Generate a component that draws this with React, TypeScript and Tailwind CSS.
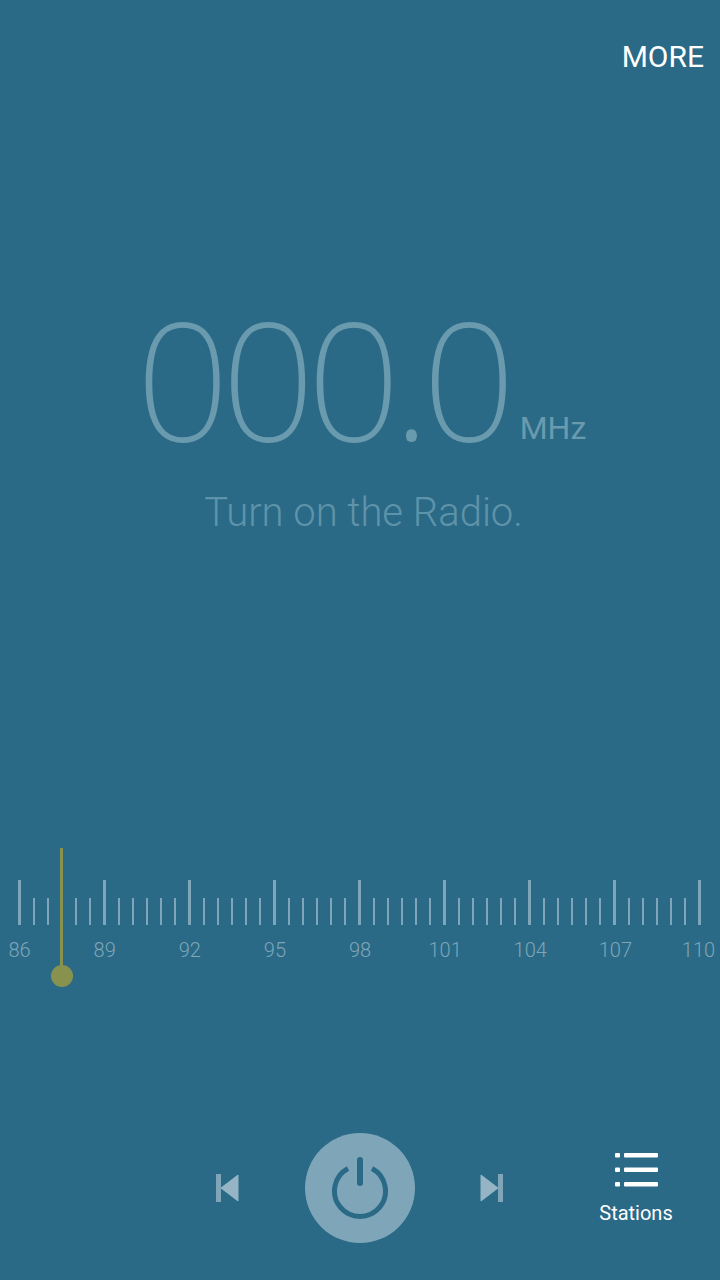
import React from 'react';

const labels = [86, 89, 92, 95, 98, 101, 104, 107, 110];
const ticks = Array.from({ length: 49 }, (_, i) => i);

function PrevIcon() {
  return (
    <svg width="23" height="30" viewBox="0 0 23 30" fill="none">
      <rect x="0" y="1" width="5" height="28" fill="#7fa6b8" />
      <path d="M22 2 L22 28 L5 15 Z" fill="#95b5c4" stroke="#95b5c4" strokeWidth="1" strokeLinejoin="round" />
    </svg>
  );
}

function NextIcon() {
  return (
    <svg width="23" height="30" viewBox="0 0 23 30" fill="none">
      <path d="M1 2 L1 28 L18 15 Z" fill="#95b5c4" stroke="#95b5c4" strokeWidth="1" strokeLinejoin="round" />
      <rect x="18" y="1" width="5" height="28" fill="#7fa6b8" />
    </svg>
  );
}

function PowerIcon() {
  return (
    <svg width="60" height="62" viewBox="0 0 60 62" fill="none" stroke="#2a6a87" strokeLinecap="round">
      <path d="M42 11.5 A25.5 25.5 0 1 1 18 11.5" strokeWidth="5" strokeLinecap="butt" />
      <path d="M30 3 V 26" strokeWidth="6" />
    </svg>
  );
}

function ListIcon() {
  return (
    <svg width="43" height="36" viewBox="0 0 43 36" fill="#ffffff">
      <rect x="0" y="1" width="5" height="4.5" rx="1" />
      <rect x="0" y="15.5" width="5" height="4.5" rx="1" />
      <rect x="0" y="30" width="5" height="4.5" rx="1" />
      <rect x="9" y="1" width="34" height="4.5" rx="1" />
      <rect x="9" y="15.5" width="34" height="4.5" rx="1" />
      <rect x="9" y="30" width="34" height="4.5" rx="1" />
    </svg>
  );
}

export default function App() {
  return (
    <div className="relative flex flex-col w-[720px] h-[1280px] overflow-hidden bg-[#2a6a87] font-['Roboto',sans-serif]">
      <div className="flex justify-end pt-[38px] pr-4 h-[320px]">
        <span className="text-[30px] leading-[38px] text-white">MORE</span>
      </div>

      <div className="flex flex-col">
        <div className="flex items-baseline h-[123px] pl-[136px]">
          <span className="font-['Noto_Sans',sans-serif] text-[164px] leading-[115px] font-extralight tracking-[-8px] text-[#6a9aae]">000.0</span>
          <span className="ml-[12px] -translate-y-[2px] text-[32px] leading-[40px] text-[#6a9aae]">MHz</span>
        </div>
        <p className="mt-[45px] pl-[7px] text-center text-[40px] leading-[50px] font-light text-[#5f93a9]">Turn on the Radio.</p>
      </div>

      <div className="mt-[310px] flex flex-col">
        <div className="flex items-end justify-between h-[77px] pl-[18px] pr-[19px]">
          {ticks.map((i) => (
            <div
              key={i}
              className={i % 6 === 0 ? 'w-[3px] h-[45px] bg-[#7fa6b8]' : 'w-[2px] h-[27px] bg-[#7fa6b8]'}
            />
          ))}
        </div>
        <div className="mt-[13px] flex justify-between px-[19.5px]">
          {labels.map((l) => (
            <div key={l} className={l === 110 ? 'w-0 flex justify-center -translate-x-[2px]' : 'w-0 flex justify-center'}>
              <span className="text-[20px] leading-[24px] font-light text-[#7fa6b8]">{l}</span>
            </div>
          ))}
        </div>
      </div>

      <div className="absolute left-[60px] top-[848px] w-[3px] h-[120px] bg-[#87924f]" />
      <div className="absolute left-[51px] top-[965px] w-[22px] h-[22px] rounded-full bg-[#87924f]" />

      <div className="mt-auto mb-[37px] grid grid-cols-[216px_23px_66px_110px_65px_23px_1fr] items-center">
        <div />
        <PrevIcon />
        <div />
        <div className="flex items-center justify-center w-[110px] h-[110px] rounded-full bg-[#7fa6b8]">
          <PowerIcon />
        </div>
        <div />
        <NextIcon />
        <div className="flex flex-col items-center pl-[49px]">
          <ListIcon />
          <span className="mt-[13px] text-[20px] leading-[24px] text-white">Stations</span>
        </div>
      </div>
    </div>
  );
}
